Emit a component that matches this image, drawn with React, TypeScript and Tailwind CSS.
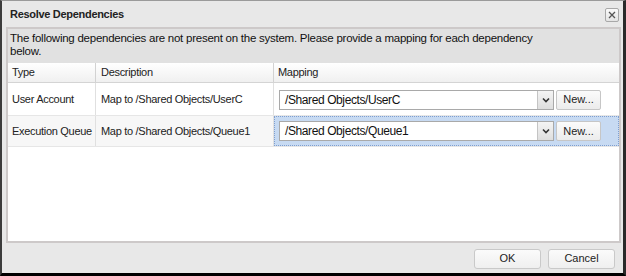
import React from "react";

const font = { fontFamily: '"Liberation Sans", Arial, sans-serif' };

function Combo({ value }: { value: string }) {
  return (
    <div className="flex items-center h-[20px] w-[275px] border border-[#a9a9a9] bg-white">
      <div className="flex-1 pl-[5px] text-[12px] tracking-[-0.4px] text-[#111] leading-none whitespace-nowrap">{value}</div>
      <div className="w-[16px] h-full border-l border-[#c4c4c4] bg-gradient-to-b from-[#f4f4f4] to-[#dedede] flex items-center justify-center">
        <svg width="8" height="6" viewBox="0 0 8 6">
          <path d="M1 1.5 L4 4.5 L7 1.5" fill="none" stroke="#333" strokeWidth="1.6" />
        </svg>
      </div>
    </div>
  );
}

function NewBtn() {
  return (
    <div className="ml-[2px] h-[20px] w-[45px] rounded-[2px] border border-[#c6c6c6] bg-gradient-to-b from-[#fbfbfb] to-[#ececec] flex items-center justify-center text-[11px] text-[#222]">
      New...
    </div>
  );
}

export default function App() {
  return (
    <div
      style={font}
      className="w-[626px] h-[276px] bg-[#e8e8e8] border-l-2 border-r-[3px] border-t border-b-[3px] border-l-[#3c3c3c] border-r-[#2a2a2a] border-t-[#9a9a9a] border-b-black flex flex-col text-[#1a1a1a]"
    >
      <div className="h-[26px] flex items-center justify-between pl-[8px] pr-[4px] shrink-0">
        <div className="text-[11px] tracking-[-0.3px] font-bold text-[#222] pt-[1px]">Resolve Dependencies</div>
        <div className="w-[14px] h-[14px] border border-[#a8a8a8] rounded-[2px] bg-gradient-to-b from-[#fafafa] to-[#e4e4e4] flex items-center justify-center mt-[2px]">
          <svg width="8" height="8" viewBox="0 0 8 8">
            <path d="M1 1 L7 7 M7 1 L1 7" stroke="#555" strokeWidth="1.3" />
          </svg>
        </div>
      </div>
      <div className="ml-[4px] mr-[2px] h-[216px] border-2 border-[#cdc9c9] bg-white flex flex-col shrink-0">
        <div className="h-[34px] bg-[#e1e1e1] pl-[2px] pt-[3px] text-[11.5px] tracking-[-0.25px] leading-[13px] text-[#111]">
          The following dependencies are not present on the system. Please provide a mapping for each dependency
          <br />
          below.
        </div>
        <div className="h-[20px] flex border-b border-[#d4d4d4] bg-gradient-to-b from-[#ffffff] to-[#f0f0f0] text-[11px] tracking-[-0.3px] text-[#222] whitespace-nowrap">
          <div className="w-[88px] pl-[4px] flex items-center border-r border-[#d2d2d2]">Type</div>
          <div className="w-[178px] pl-[5px] flex items-center border-r border-[#d2d2d2]">Description</div>
          <div className="flex-1 pl-[4px] flex items-center">Mapping</div>
        </div>
        <div className="h-[33px] flex border-b border-[#e6e6e6] text-[11px] tracking-[-0.3px] text-[#222] whitespace-nowrap">
          <div className="w-[88px] pl-[4px] flex items-center border-r border-[#e0e0e0]">User Account</div>
          <div className="w-[178px] pl-[5px] flex items-center border-r border-[#e0e0e0]">Map to /Shared Objects/UserC</div>
          <div className="flex-1 pl-[5px] flex items-center pt-[1px] tracking-normal">
            <Combo value="/Shared Objects/UserC" />
            <NewBtn />
          </div>
        </div>
        <div className="h-[31px] flex border-b border-[#e6e6e6] bg-[#f7f7f7] text-[11px] tracking-[-0.3px] text-[#222] whitespace-nowrap">
          <div className="w-[88px] pl-[4px] flex items-center border-r border-[#e0e0e0]">Execution Queue</div>
          <div className="w-[178px] pl-[5px] flex items-center border-r border-[#e0e0e0]">Map to /Shared Objects/Queue1</div>
          <div className="flex-1 pl-[4px] flex items-center bg-[#c7daf2] border border-dotted border-[#7f9fd0] tracking-normal">
            <Combo value="/Shared Objects/Queue1" />
            <NewBtn />
          </div>
        </div>
        <div className="flex-1 bg-white" />
      </div>
      <div className="flex-1 flex items-center justify-end pr-[8px] gap-[7px] pt-[1px]">
        <div className="w-[67px] h-[20px] rounded-[3px] border border-[#c9c9c9] bg-gradient-to-b from-[#fbfbfb] to-[#efefef] flex items-center justify-center text-[11px] text-[#222]">
          OK
        </div>
        <div className="w-[67px] h-[20px] rounded-[3px] border border-[#c9c9c9] bg-gradient-to-b from-[#fbfbfb] to-[#efefef] flex items-center justify-center text-[11px] text-[#222]">
          Cancel
        </div>
      </div>
    </div>
  );
}
